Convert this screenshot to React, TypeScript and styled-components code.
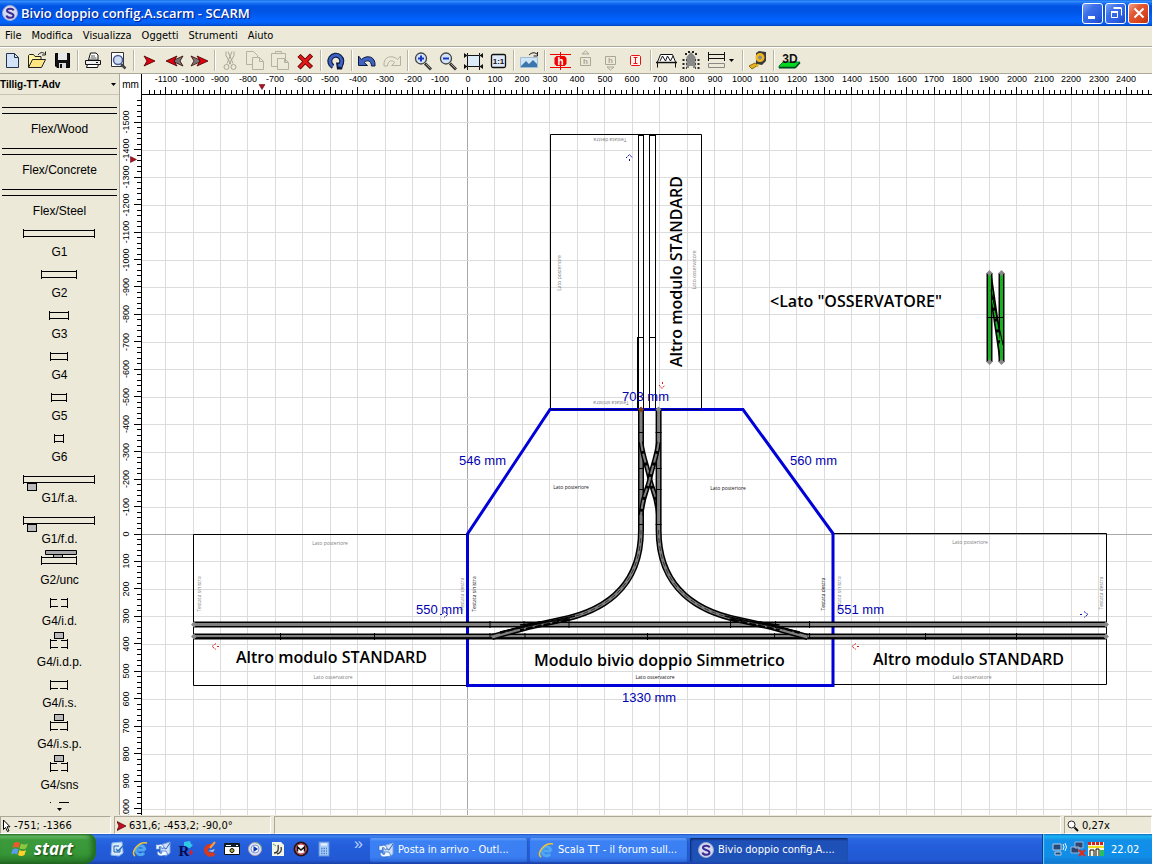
import React from 'react';
import styled, { createGlobalStyle } from 'styled-components';

const UI = '"DejaVu Sans Condensed", "DejaVu Sans", sans-serif';
const HUMANIST = '"Open Sans", "Noto Sans", sans-serif';
const ARIAL = '"Liberation Sans", Arial, sans-serif';
const FACE = '#ece9d8';

const GlobalStyle = createGlobalStyle`
  * { box-sizing: border-box; }
  body { margin: 0; background: #fff; font-family: ${UI}; font-size: 11px; color: #000; }
  button, select { font: inherit; color: inherit; }
`;

const Desktop = styled.div`
  display: flex;
  flex-direction: column;
  height: 100vh;
  min-height: 480px;
  padding-right: 4px;
  overflow: hidden;
`;

/* ---------- title bar ---------- */

const TitleBar = styled.header`
  display: flex;
  align-items: center;
  flex: none;
  height: 26px;
  padding: 0 3px 0 2px;
  gap: 3px;
  background: linear-gradient(#0a5ae0 0, #3a94ff 1px, #1a72f4 3px, #0054e3 6px, #0055e5 12px, #0260fa 18px, #0366ff 22px, #0253d8 25px, #003dbc 26px);
`;

const Title = styled.h1`
  flex: 1;
  margin: 0;
  color: #fff;
  font: 600 13px/24px ${HUMANIST};
  text-shadow: 1px 1px 1px #0a1883;
  white-space: nowrap;
`;

const CaptionButton = styled.button<{ $close?: boolean }>`
  display: grid;
  place-items: center;
  width: 21px;
  height: 21px;
  margin-left: -1px;
  padding: 0;
  border: 1px solid #fff;
  border-radius: 3px;
  background: ${p => (p.$close
    ? 'linear-gradient(135deg, #f0a088 0, #e25a35 35%, #d8421a 75%, #b83008)'
    : 'linear-gradient(135deg, #7ba2f2 0, #3c70ea 35%, #2a5ce0 75%, #1745c0)')};
`;

/* ---------- menu and toolbar ---------- */

const MenuBar = styled.nav`
  display: flex;
  flex: none;
  gap: 10px;
  height: 21px;
  padding: 0 5px;
  background: ${FACE};
  border-bottom: 1px solid #aca899;
`;

const MenuItem = styled.button`
  padding: 0 0 2px;
  border: 0;
  background: none;
`;

const ToolBar = styled.div`
  display: flex;
  flex: none;
  align-items: center;
  height: 27px;
  background: ${FACE};
  border-top: 1px solid #fff;
  border-bottom: 1px solid #aca899;
`;

const Tool = styled.button<{ $narrow?: boolean }>`
  display: grid;
  place-items: center start;
  width: ${p => (p.$narrow ? 11 : 25)}px;
  height: 24px;
  padding: 0;
  border: 0;
  background: none;
`;

const ToolGap = styled.span`
  width: 6px;
  height: 21px;
  background: linear-gradient(90deg, transparent 2px, #b9b5a2 2px, #b9b5a2 3px, #fff 3px, #fff 4px, transparent 4px);
`;

/* ---------- work area ---------- */

const Workspace = styled.main`
  display: grid;
  grid-template-columns: 120px 22px minmax(0, 1fr);
  grid-template-rows: 21px minmax(0, 1fr);
  flex: 1;
  min-height: 0;
`;

const Palette = styled.aside`
  grid-row: 1 / 3;
  display: flex;
  flex-direction: column;
  min-height: 0;
  background: ${FACE};
  border-right: 1px solid #aca899;
`;

const LibraryRow = styled.label`
  display: grid;
  grid-template-columns: minmax(0, 1fr);
  flex: none;
  align-items: center;
`;

const LibraryField = styled.select`
  grid-area: 1 / 1;
  height: 21px;
  padding: 2px 12px 0 0;
  border: 0;
  border-bottom: 1px solid #c9c5b2;
  outline: 0;
  appearance: none;
  font: bold 10px/18px ${ARIAL};
  background: ${FACE};
`;

const SelectArrow = styled.svg`
  grid-area: 1 / 1;
  justify-self: end;
  margin-right: 3px;
  pointer-events: none;
`;

const PaletteList = styled.div`
  flex: 1;
  min-height: 0;
  padding-top: 3px;
  overflow: hidden;
`;

const PaletteItem = styled.button`
  display: flex;
  flex-direction: column;
  align-items: center;
  width: 119px;
  height: 41px;
  padding: 0;
  border: 0;
  background: none;
  font: 12px/14px ${ARIAL};
`;

const ScrollMore = styled.button`
  display: grid;
  place-items: center;
  flex: none;
  width: 118px;
  height: 11px;
  padding: 0;
  border: 0;
  background: none;
`;

const UnitCell = styled.div`
  display: flex;
  align-items: center;
  justify-content: center;
  border-right: 1px solid #000;
  font: 10px/20px ${ARIAL};
`;

const Drawing = styled.svg`
  display: block;
  width: 100%;
  height: 100%;
  overflow: hidden;
`;

const RulerText = styled.text`
  font: 9px ${ARIAL};
  text-anchor: middle;
`;

const ModuleName = styled.text`
  font: 600 16px ${HUMANIST};
`;

const SideNote = styled.text<{ $dark?: boolean }>`
  font: 5px ${HUMANIST};
  fill: ${p => (p.$dark ? '#111' : '#808080')};
  text-anchor: middle;
`;

const Dimension = styled.text`
  font: 13px ${ARIAL};
  fill: #0000b0;
`;

/* ---------- status bar and task bar ---------- */

const StatusBar = styled.footer`
  display: flex;
  flex: none;
  gap: 3px;
  height: 19px;
  background: ${FACE};
`;

const StatusCell = styled.div<{ $width?: number }>`
  display: flex;
  align-items: center;
  gap: 3px;
  flex: ${p => (p.$width ? 'none' : '1')};
  width: ${p => (p.$width ? `${p.$width}px` : 'auto')};
  height: 18px;
  margin-top: 1px;
  padding: 1px 0 0 2px;
  border: 1px solid #aca899;
  border-right-color: #fff;
  border-bottom-color: #fff;
  white-space: nowrap;
`;

const TaskBar = styled.div`
  display: flex;
  flex: none;
  height: 30px;
  background: linear-gradient(#1f4fc0 0, #3f85f0 2px, #2a66e2 5px, #245edb 12px, #2258d4 26px, #1941a5 30px);
`;

const StartButton = styled.button`
  display: flex;
  align-items: center;
  gap: 5px;
  width: 96px;
  height: 30px;
  padding: 0 0 1px 11px;
  border: 0;
  border-radius: 0 8px 12px 0;
  color: #fff;
  font: italic bold 17px/28px ${HUMANIST};
  text-shadow: 1px 1px 2px #14420f;
  background: linear-gradient(#2f7a30 0, #6cc068 2px, #3c9a3c 6px, #369636 20px, #2b7c2b 27px, #1f5f1f 30px);
  box-shadow: inset -4px 0 5px #216b21;
`;

const QuickLaunch = styled.div`
  display: flex;
  align-items: center;
  width: 273px;
  padding-left: 9px;
`;

const QuickButton = styled.button`
  display: grid;
  place-items: center;
  width: 23px;
  height: 26px;
  padding: 0;
  border: 0;
  background: none;
`;

const MoreButton = styled.button`
  margin-left: 14px;
  padding: 0 5px 10px;
  border: 0;
  color: #bcd3ff;
  background: none;
  font: 16px/14px ${ARIAL};
`;

const Tasks = styled.div`
  display: flex;
  flex: 1;
  align-items: center;
  gap: 2px;
  padding: 1px 0 0 1px;
`;

const Task = styled.button<{ $active?: boolean }>`
  display: flex;
  align-items: center;
  gap: 4px;
  width: 158px;
  height: 24px;
  padding: 0 8px;
  border: 0;
  border-radius: 2px;
  color: #fff;
  white-space: nowrap;
  background: ${p => (p.$active
    ? 'linear-gradient(#153a90, #1e50b8 3px, #1e52b7)'
    : 'linear-gradient(#6aa4ff, #3c81f3 3px, #3a7ef2 19px, #2d66d8)')};
  box-shadow: ${p => (p.$active ? 'inset 1px 1px 2px #0c2866' : 'inset -1px 0 1px #2456c0')};
`;

const Tray = styled.div`
  display: flex;
  align-items: center;
  gap: 2px;
  width: 110px;
  padding-left: 9px;
  color: #fff;
  background: linear-gradient(#0c59b9 0, #18b6f2 2px, #1290e8 6px, #0f8ee8 22px, #1276cc 30px);
  border-left: 1px solid #0b3c8a;
  box-shadow: inset 1px 0 1px #5fd0ff;
`;

const Clock = styled.time`
  margin-left: 5px;
`;

/* ---------- toolbar glyphs on a 24px square ---------- */

const Glyph = ({ children, size = 24 }: { children: React.ReactNode; size?: number }) => (
  <svg width={size} height={size} viewBox={`0 0 ${size} ${size}`} fill="none" aria-hidden="true">{children}</svg>
);

const ToolText = styled.text<{ $size: number; $serif?: boolean }>`
  font: bold ${p => p.$size}px ${p => (p.$serif ? '"Liberation Serif", serif' : ARIAL)};
  text-anchor: middle;
`;

const DartRight = ({ x, fill = '#e00010' }: { x: number; fill?: string }) => (
  <path d={`M${x} 7l11 5-11 5 3-5z`} fill={fill} stroke="#400" strokeWidth=".8" />
);
const DartLeft = ({ x, fill = '#e00010' }: { x: number; fill?: string }) => (
  <path d={`M${x} 7l-11 5 11 5-3-5z`} fill={fill} stroke="#300" strokeWidth=".8" />
);

const Lens = ({ sign }: { sign: string }) => (
  <>
    <path d="M14 14.500l6 6" stroke="#333" strokeWidth="3" />
    <path d="M15 15l4.500 4.500" stroke="#999" strokeWidth="1" />
    <circle cx="10" cy="9.500" r="5.500" fill="#d4e3fa" stroke="#444" strokeWidth="1.300" />
    <path d={sign} stroke="#1638c0" strokeWidth="2" />
  </>
);

const tools: Record<string, React.ReactNode> = {
  'Nuovo': (
    <path d="M6.500 4.500h8l4 4v10h-12zM14.500 4.500v4h4" fill="#d3e3f8" stroke="#23344f" />
  ),
  'Apri': (
    <>
      <path d="M3.500 18.500v-12l1-1h4l1.500 2h6v3" fill="#fff3a0" stroke="#222" />
      <path d="M3.500 18.500l4-8h13l-4 8z" fill="#ffe680" stroke="#222" />
      <path d="M13 6q3-4 6.500-1.500M20.500 2.500v3.500h-3.500" stroke="#222" />
    </>
  ),
  'Salva': (
    <>
      <path d="M5.500 4.500h14v14h-12.500l-1.500-1.500z" fill="#111" stroke="#000" />
      <path d="M8 4h9v7h-9z" fill="#e8e8e8" />
      <path d="M9 14h7v5h-7z" fill="#ddd" />
      <path d="M10 15h2v4h-2z" fill="#111" />
    </>
  ),
  'Stampa': (
    <>
      <path d="M7.500 11l2-7h5.500l2 2v5z" fill="#fff" stroke="#111" />
      <path d="M10 7h4M9.500 9h6" stroke="#555" />
      <path d="M4.500 11.500h15v4h-15z" fill="#eee" stroke="#111" />
      <path d="M6.500 15.500h11l-1 3h-11z" fill="#fff" stroke="#111" />
      <path d="M15 13.500h2" stroke="#111" />
    </>
  ),
  'Anteprima': (
    <>
      <path d="M5.500 3.500h12v14h-12z" fill="#fff" stroke="#333" />
      <path d="M15 15l4.500 4.500" stroke="#444" strokeWidth="2.500" />
      <circle cx="12" cy="11" r="4.500" fill="#cfdcf5" stroke="#4b5f94" strokeWidth="1.500" />
    </>
  ),
  'Avanti': <DartRight x={7} />,
  'Inizio': <><DartLeft x={21} fill="#777" /><DartLeft x={15} /></>,
  'Fine': <><DartRight x={4} fill="#777" /><DartRight x={10} /></>,
  'Taglia': (
    <g stroke="#aaa694">
      <path d="M8 2.500v4l5 9M16 2.500v4l-5 9M10 2.500l5 12M14 2.500l-5 12" />
      <circle cx="8.500" cy="18" r="2.500" /><circle cx="15.500" cy="18" r="2.500" />
    </g>
  ),
  'Copia': (
    <g stroke="#b5b19e" fill="#ece9d8">
      <path d="M3.500 2.500h7l4 4v9h-11z" /><path d="M9.500 8.500h7l4 4v8h-11zM16.500 8.500v4h4" />
    </g>
  ),
  'Incolla': (
    <g stroke="#b5b19e" fill="#ece9d8">
      <path d="M3.500 4.500h14v13h-14zM7.500 4.500v-2h6v2" /><path d="M9.500 9.500h7l4 4v7h-11zM16.500 9.500v4h4" />
    </g>
  ),
  'Elimina': (
    <>
      <path d="M6 6.500l12.500 12M18.500 6l-12.500 13" stroke="#5a0000" strokeWidth="4.500" />
      <path d="M6.500 7l11.500 11M18 6.500l-11.500 12" stroke="#e01818" strokeWidth="2.800" />
    </>
  ),
  'Ruota': (
    <>
      <path d="M9 17.500a6 6 0 1 1 7-1" stroke="#10183c" strokeWidth="5" />
      <path d="M12 13.500h8l-2 7h-5z" fill="#10183c" />
      <path d="M9 17.500a6 6 0 1 1 7.500-1.500M14 16l4 1" stroke="#3d63c4" strokeWidth="2.800" />
    </>
  ),
  'Annulla': (
    <path d="M3.500 7v9.500h9l-3.300-3c3-3 7-2 7.300 3.500h3.500c1-10-8.500-11.500-13.500-6.500z" fill="#3d63c4" stroke="#10183c" />
  ),
  'Ripeti': (
    <path d="M20.500 7v9.500h-9l3.300-3c-3-3-7-2-7.300 3.500h-3.500c-1-10 8.500-11.500 13.500-6.500z" stroke="#b5b19e" />
  ),
  'Ingrandisci': <Lens sign="M7 9.500h6M10 6.500v6" />,
  'Riduci': <Lens sign="M7 9.500h6" />,
  'Adatta': (
    <>
      <path d="M6.500 6.500h12v11h-12z" fill="#dcebf8" stroke="#111" />
      <path d="M3 6.500h3M19 6.500h3M3 17.500h3M19 17.500h3M6.500 4v2M18.500 4v2M6.500 18v3M18.500 18v3" stroke="#111" />
      <path d="M3 4l3.500 2.500L3 9zM22 4l-3.500 2.500L22 9zM3 15l3.500 2.500L3 20zM22 15l-3.500 2.500L22 20z" fill="#111" />
    </>
  ),
  'Scala 1:1': (
    <>
      <rect x="5.500" y="5.500" width="14" height="13" rx="1.500" fill="#dfe9fa" stroke="#111" strokeWidth="1.300" />
      <ToolText $size={8} x="12.500" y="15" fill="#111">1:1</ToolText>
    </>
  ),
  'Sfondo': (
    <>
      <path d="M3.500 8.500h17v10h-17z" fill="#cfe4f7" stroke="#9dbcd8" />
      <path d="M4 17l5-5 3 3 4-4 4 4v3h-16z" fill="#3d76ab" />
      <path d="M12 6q4-4 8-1M20.500 3v4h-4" stroke="#222" />
    </>
  ),
  'Altezza': (
    <>
      <path d="M2 5.500h21M2 18.500h21M12.500 3v18" stroke="#f00000" />
      <path d="M6.500 9l2-2h8l2 2v6l-2 2h-8l-2-2z" fill="#f00000" />
      <ToolText $size={10} x="12.500" y="16" fill="#fff">h</ToolText>
    </>
  ),
  'Altezza su': (
    <g stroke="#aaa694">
      <path d="M7.500 8.500h10v8h-10z" /><path d="M9 5l3.500-3 3.500 3z" />
      <ToolText $size={8} x="12.500" y="15" fill="#aaa694" stroke="none">h</ToolText>
    </g>
  ),
  'Altezza giù': (
    <g stroke="#aaa694">
      <path d="M7.500 7.500h10v8h-10z" /><path d="M9 18l3.500 3 3.500-3z" />
      <ToolText $size={8} x="12.500" y="14" fill="#aaa694" stroke="none">h</ToolText>
    </g>
  ),
  'Pendenza': (
    <g stroke="#e81010">
      <path d="M8.500 6.500h8l1 1v8l-1 1h-8l-1-1v-8z" fill="#fff4f0" /><path d="M10.500 8.500h4M10.500 14.500h4M12.500 8.500v6" />
    </g>
  ),
  'Ponte': (
    <>
      <path d="M3.500 13l3-7.500h12l3 7.500" fill="#fff" stroke="#111" />
      <path d="M6 12l2.500-5 3 5 2-5 3 5 2.500-5" stroke="#111" />
      <path d="M2 13.500h21" stroke="#111" strokeWidth="1.500" />
      <path d="M3.500 14v4.500M21.500 14v4.500" stroke="#111" />
    </>
  ),
  'Tunnel': (
    <>
      <path d="M7.500 19v-11l4.500-5 4.500 5v11h-2.500v-2h-4v2z" fill="#888" />
      <path d="M4.500 20v-12M19.500 20v-12M6 5h2M16 5h2M9 3h6" stroke="#222" strokeWidth="2" strokeDasharray="2 2" />
      <path d="M7.500 20v-11M16.500 20v-11" stroke="#444" strokeDasharray="2 2" />
    </>
  ),
  'Binari paralleli': (
    <>
      <path d="M4 5.500h17M4 9.500h17M4.500 3v9M20.500 3v9" stroke="#111" />
      <path d="M4.500 14.500h16v4h-16z" stroke="#888" />
    </>
  ),
  'Misura': (
    <>
      <path d="M3 17l6-3 3 2-6 4z" fill="#e6b422" stroke="#8a6a10" />
      <path d="M10 4l3-2 7 1v9l-4 4-6-1z" fill="#3b3b3b" />
      <circle cx="14" cy="8.500" r="4.500" fill="#f0b81e" /><circle cx="14" cy="8.500" r="2" fill="#8b8b8b" />
      <path d="M12 15l-1 3" stroke="#e6b422" strokeWidth="2" />
    </>
  ),
};

const View3D = () => (
  <>
    <path d="M2 17l4-4h17l-5 6h-16z" fill="#00d820" stroke="#063" strokeWidth=".8" />
    <path d="M2 18.500h16.500l4.500-5" stroke="#042" strokeWidth="1.500" />
    <ToolText $size={12} x="13" y="14" fill="#111">3D</ToolText>
  </>
);

const toolGroups: string[][] = [
  ['Nuovo', 'Apri', 'Salva'],
  ['Stampa', 'Anteprima'],
  ['Avanti', 'Inizio', 'Fine'],
  ['Taglia', 'Copia', 'Incolla', 'Elimina'],
  ['Ruota'],
  ['Annulla', 'Ripeti'],
  ['Ingrandisci', 'Riduci', 'Adatta', 'Scala 1:1'],
  ['Sfondo'],
  ['Altezza', 'Altezza su', 'Altezza giù', 'Pendenza'],
  ['Ponte', 'Tunnel', 'Binari paralleli', 'menu'],
  ['Misura'],
  ['3D'],
];

const DownTriangle = () => (
  <svg width="5" height="3" viewBox="0 0 5 3" aria-hidden="true"><path d="M0 0h5l-2.500 3z" /></svg>
);

/* ---------- track palette ---------- */

const Flex = () => <path d="M2 9.500h115M2 15.500h115" stroke="#000" />;
const Straight = ({ w, y = 8 }: { w: number; y?: number }) => {
  const l = Math.round(58 - w / 2) + 0.5;
  return <path d={`M${l} ${y}v9M${l + w} ${y}v9M${l} ${y + 1.5}h${w}M${l} ${y + 7.5}h${w}`} stroke="#000" />;
};
const Feeder = () => (
  <><Straight w={71} y={8} /><rect x="27.500" y="16.500" width="9" height="7" fill="#bbb" stroke="#000" /></>
);
const Isolated = ({ top, box }: { top?: boolean; box?: boolean }) => (
  <>
    <path d="M50.500 8v10M67.500 8v10" stroke="#000" />
    <path d={top ? 'M50 9.500h7m4 0h7M50 16.500h8m3 0h7' : 'M50 9.500h18M50 16.500h8m2 0h8'} stroke="#000" />
    {box && <rect x="54.500" y="1.500" width="9" height="6" fill="#bbb" stroke="#000" />}
  </>
);

const palette: { name: string; shape: React.ReactNode }[] = [
  { name: 'Flex/Wood', shape: <Flex /> },
  { name: 'Flex/Concrete', shape: <Flex /> },
  { name: 'Flex/Steel', shape: <Flex /> },
  { name: 'G1', shape: <Straight w={71} /> },
  { name: 'G2', shape: <Straight w={35} /> },
  { name: 'G3', shape: <Straight w={19} /> },
  { name: 'G4', shape: <Straight w={17} /> },
  { name: 'G5', shape: <Straight w={15} /> },
  { name: 'G6', shape: <Straight w={9} /> },
  { name: 'G1/f.a.', shape: <Feeder /> },
  { name: 'G1/f.d.', shape: <Feeder /> },
  {
    name: 'G2/unc',
    shape: (
      <>
        <Straight w={35} y={7} />
        <path d="M45.500 1.500h31v4h-31zM53.500 5.500h9v3h-9z" fill="#aaa" stroke="#000" />
      </>
    ),
  },
  { name: 'G4/i.d.', shape: <Isolated top /> },
  { name: 'G4/i.d.p.', shape: <Isolated top box /> },
  { name: 'G4/i.s.', shape: <Isolated /> },
  { name: 'G4/i.s.p.', shape: <Isolated box /> },
  { name: 'G4/sns', shape: <Isolated box top /> },
  { name: '', shape: <path d="M50 7.500h1M59 7.500h10" stroke="#000" /> },
];

/* ---------- plan drawing: 100 mm is 27.45 px on screen ---------- */

const STEP = 27.45;
const ORIGIN_X = 467.5;
const ORIGIN_Y = 534;
const VIEW_X = 142;
const VIEW_Y = 95;
const range = (from: number, to: number) => Array.from({ length: to - from + 1 }, (_, i) => from + i);
const px = (v: number) => Math.round(v - 0.5) + 0.5;

const HorizontalRuler = () => (
  <Drawing>
    <g transform={`translate(${-VIEW_X} -74)`}>
      {range(-58, 225).map(i => {
        const x = px(ORIGIN_X + (i * STEP) / 5);
        return <path key={i} d={`M${x} ${i % 5 ? 90 : 87}V95`} stroke="#000" />;
      })}
      {range(-11, 24).map(i => (
        <RulerText key={i} x={Math.round(ORIGIN_X + i * STEP)} y={82}>{i * 100}</RulerText>
      ))}
      <path d="M142 94.500H4000" stroke="#000" />
      <path d="M259 84.500h6l-3 5z" fill="#b01020" stroke="#400" strokeWidth=".5" />
    </g>
  </Drawing>
);

const VerticalRuler = () => (
  <Drawing>
    <g transform={`translate(-120 ${-VIEW_Y})`}>
      {range(-79, 100).map(i => {
        const y = px(ORIGIN_Y + (i * STEP) / 5);
        return <path key={i} d={`M${i % 5 ? 137 : 134} ${y}H142`} stroke="#000" />;
      })}
      {range(-15, 10).map(i => (
        <RulerText key={i} transform={`translate(129 ${Math.round(ORIGIN_Y + i * STEP)}) rotate(-90)`}>{i * 100}</RulerText>
      ))}
      <path d="M141.500 95V3000" stroke="#000" />
      <path d="M130.500 156.500v6l6-3z" fill="#b01020" stroke="#400" strokeWidth=".5" />
    </g>
  </Drawing>
);

const Track = ({ d, core = '#808080' }: { d: string; core?: string }) => (
  <>
    <path d={d} stroke="#000" strokeWidth="6" />
    <path d={d} stroke={core} strokeWidth="3" />
  </>
);

const Branch = () => (
  <>
    <Track d="M641 409V530C641 590 600 612 560 620L528 627L492 637" />
    <path d="M570 619L520 625M500 632L575 616" stroke="#000" strokeWidth="1.500" />
    <path d="M641 530C641 590 600 612 560 620L528 627" stroke="#222" strokeWidth=".8" strokeDasharray="5 3" />
    <path d="M568 620L520 630M540 622L500 633" stroke="#000" strokeWidth="2" strokeDasharray="7 2" />
    <path d="M641 442C643 458 648 468 650 480C653 492 657 496 658.500 515" stroke="#000" strokeWidth="5" />
    <path d="M641 442C643 458 648 468 650 480C653 492 657 496 658.500 515" stroke="#808080" strokeWidth="2" strokeDasharray="9 3" />
    <path d="M638 432.500h6M638 468.500h6M638 489.500h6M638 524.500h6M524 621v7M569 621v7M490 621v7M490 633v6M525 633v6" stroke="#000" />
  </>
);

const tip = (x: number, y: number) => `M${x - 3} ${y}l3-3 3 3-3 3z`;

const Plan = () => (
  <Drawing fill="none">
    <g transform={`translate(${-VIEW_X} ${-VIEW_Y})`}>
      {range(-11, 60).map(i => (
        <path key={`v${i}`} d={`M${px(ORIGIN_X + i * STEP)} 95V3000`} stroke={i ? '#dcdcdc' : '#a8a8a8'} />
      ))}
      {range(-15, 60).map(i => (
        <path key={`h${i}`} d={`M142 ${px(ORIGIN_Y + 0.5 + i * STEP)}H4000`} stroke={i ? '#dcdcdc' : '#a8a8a8'} />
      ))}

      <g stroke="#000">
        <path d="M550.500 134.500H701.500V409.500H550.500zM193.500 534.500H467.500V685.500H193.500zM833.500 533.500H1106.500V684.500H833.500z" />
        <path d="M638.500 409V134.500M643.500 135V409M649.500 135V409M655.500 135V409M638 337.500H643.500M649.500 337.500H655.500M638 135.500h6M649 135.500h7" />
        <path d="M638 337V409" strokeWidth="2" />
      </g>

      <path d="M550 409.500H743L833 533.500V685.500H467.500V534z" stroke="#0000d8" strokeWidth="3" />
      <path d="M550 409.500H701" stroke="#000058" />

      <SideNote $dark x="571" y="489">Lato posteriore</SideNote>
      <SideNote $dark x="728" y="490">Lato posteriore</SideNote>
      <SideNote $dark x="655" y="679">Lato osservatore</SideNote>
      <SideNote x="330" y="545">Lato posteriore</SideNote>
      <SideNote x="970" y="544">Lato posteriore</SideNote>
      <SideNote x="333" y="679">Lato osservatore</SideNote>
      <SideNote x="972" y="679">Lato osservatore</SideNote>
      <SideNote transform="translate(561 273) rotate(-90)">Lato posteriore</SideNote>
      <SideNote transform="translate(696 270) rotate(-90)">Lato osservatore</SideNote>
      <SideNote transform="translate(610 138) rotate(180)">Testata destra</SideNote>
      <SideNote transform="translate(611 401) rotate(180)">Testata sinistra</SideNote>
      <SideNote transform="translate(201 594) rotate(-90)">Testata sinistra</SideNote>
      <SideNote transform="translate(464 594) rotate(-90)">Testata destra</SideNote>
      <SideNote $dark transform="translate(476 594) rotate(-90)">Testata sinistra</SideNote>
      <SideNote $dark transform="translate(825 594) rotate(-90)">Testata destra</SideNote>
      <SideNote transform="translate(841 594) rotate(-90)">Testata sinistra</SideNote>
      <SideNote transform="translate(1103 593) rotate(-90)">Testata destra</SideNote>

      <Track d="M193 624.500H1107" />
      <Track d="M193 636.500H1107" />
      <path d="M193 637.500H1107" stroke="#111" />
      <Branch />
      <g transform="translate(1299.600 0) scale(-1 1)"><Branch /></g>
      <path d="M280.500 633v7M374.500 633v7M647.500 633v7M925.500 633v7M1016.500 633v7" stroke="#000" />
      <path d={[tip(194, 624.5), tip(194, 636.5), tip(1106, 624.5), tip(1106, 636.5), tip(658.5, 409.5)].join('')} fill="#888" />
      <path d={tip(641, 409.5)} fill="#804018" />

      <g>
        <path d="M989.500 276L1001.500 358" stroke="#000" strokeWidth="5" />
        <Track d="M989.500 273V362" core="#18b020" />
        <Track d="M1001.500 273V362" core="#18b020" />
        <path d="M989.500 278L1001.500 356" stroke="#18b020" strokeWidth="2" strokeDasharray="8 3" />
        <path d="M991.500 274V362M991 290L1003 345M988 317.500h16" stroke="#000" />
        <path d={[tip(989.5, 273), tip(1001.5, 273), tip(989.5, 362), tip(1001.5, 362)].join('')} fill="#888" />
      </g>

      <path d="M216 643.500l-4 3 4 3M217 646.500h2M856 643.500l-4 3 4 3M857 646.500h2M659 385l3 3.500 3-3.500M662.500 382v2" stroke="#e02020" strokeDasharray="2 1" />
      <path d="M1084 611.500l4 3-4 3M1080 614.500h3M444 611.500l4 3-4 3M440 614.500h3M626 158l3.500-3.500 3 3.500M629.500 159v2" stroke="#1010b0" strokeDasharray="2 1" />

      <Dimension x="622" y="401">703 mm</Dimension>
      <Dimension x="459" y="465">546 mm</Dimension>
      <Dimension x="790" y="465">560 mm</Dimension>
      <Dimension x="416" y="614">550 mm</Dimension>
      <Dimension x="837" y="614">551 mm</Dimension>
      <Dimension x="622" y="702">1330 mm</Dimension>

      <g fill="#000">
        <ModuleName x="236" y="663">Altro modulo STANDARD</ModuleName>
        <ModuleName x="873" y="665">Altro modulo STANDARD</ModuleName>
        <ModuleName x="534" y="666">Modulo bivio doppio Simmetrico</ModuleName>
        <ModuleName x="770" y="307">{'<Lato "OSSERVATORE"'}</ModuleName>
        <ModuleName transform="translate(682 367) rotate(-90)">Altro modulo STANDARD</ModuleName>
      </g>
    </g>
  </Drawing>
);

/* ---------- small 16px pictures ---------- */

const AppLogo = () => (
  <Glyph size={16}>
    <circle cx="8" cy="8" r="7.500" fill="#d5daf0" stroke="#9aa6d0" />
    <path d="M11.500 5.500C11 3 5 3 5 5.800C5 8.500 11.500 7.500 11.500 10.500C11.500 13.500 5 13.500 4.500 10.500" stroke="#3a2a94" strokeWidth="2" />
  </Glyph>
);
const Envelope = () => (
  <Glyph size={16}>
    <path d="M5 4l10-3v11l-4 3-5-2z" fill="#cfe0fb" stroke="#7fa4dc" />
    <path d="M6 5l5 3 4-6" stroke="#3a66b4" />
    <path d="M1 3l2 1c3-2 6 0 6 3l-2 1c0-2-1-3-3-2l1 2-4 .500zM13 14l-7 1c-3 0-4-2-4-4l2-1c0 2 1 3 3 2l-1-2 5 0z" fill="#f4faff" stroke="#2a68c8" strokeWidth=".7" />
  </Glyph>
);
const Explorer = () => (
  <Glyph size={16}>
    <path d="M13 9H6M13 9A4.500 4.500 0 1 0 12 12" stroke="#4fa8f0" strokeWidth="3" />
    <path d="M3 15C-2 12 6 0 15 2" stroke="#f4c430" strokeWidth="1.500" />
  </Glyph>
);

const quick: { name: string; icon: React.ReactNode }[] = [
  {
    name: 'Mostra desktop',
    icon: (
      <Glyph size={16}>
        <path d="M3 2l10-1 1 11-4 3-8-1z" fill="#d9eafc" stroke="#8fbcec" />
        <path d="M5 5h5M5 5v6h6V8" stroke="#1d5faa" /><path d="M7 8l2 2 6-6" stroke="#2b6fc0" strokeWidth="1.500" />
      </Glyph>
    ),
  },
  { name: 'Internet Explorer', icon: <Explorer /> },
  { name: 'Outlook', icon: <Envelope /> },
  {
    name: 'Editor',
    icon: (
      <Glyph size={16}>
        <path d="M6 1l6-1 1 3 2 1-3 3-6-1z" fill="#30c8e8" />
        <ToolText $size={15} $serif x="6" y="15" fill="#060a50">R</ToolText>
        <path d="M13 9v5M11 11.500h4" stroke="#e02020" strokeWidth="1.500" />
      </Glyph>
    ),
  },
  {
    name: 'CCleaner',
    icon: <Glyph size={16}><path d="M11 5A4.500 4.500 0 1 0 13 12" stroke="#d8381c" strokeWidth="4" /><path d="M9 7l5-6" stroke="#f4a040" strokeWidth="2" /><path d="M7 10l7-2-2 3z" fill="#a8c8f0" /></Glyph>,
  },
  {
    name: 'Prompt',
    icon: <Glyph size={16}><path d="M.500 2.500h15v11H.500z" fill="#fff" stroke="#111" /><path d="M1 4.500h14" stroke="#123" strokeWidth="3" /><path d="M2 4.500h5M12 4.500h2" stroke="#fff" /><circle cx="8" cy="9.500" r="2" fill="#aa3" stroke="#111" /></Glyph>,
  },
  {
    name: 'Media Player',
    icon: <Glyph size={16}><circle cx="8" cy="8" r="6.500" fill="#dfe6f8" stroke="#b8a0a8" /><path d="M8 1.500a6.500 6.500 0 0 1 6.500 6.500" stroke="#70b070" /><circle cx="8" cy="8" r="4" fill="#f4f8ff" stroke="#7a98d8" /><path d="M6.500 5l4.500 3-4.500 3z" fill="#1238b0" /></Glyph>,
  },
  {
    name: 'Audio',
    icon: <Glyph size={16}><path d="M2 1h9l3 3v11H2z" fill="#f2f4e8" /><path d="M4 12c4 0 5-3 4-8M7 13c4-1 5-4 4-7" stroke="#333" strokeWidth="1.300" /><path d="M3 3l3 2" stroke="#5a5" /></Glyph>,
  },
  {
    name: 'Modem',
    icon: <Glyph size={16}><circle cx="8" cy="8" r="6.500" fill="#fff" stroke="#301010" strokeWidth="2" /><circle cx="8" cy="8" r="5" stroke="#c02030" /><path d="M4.500 10.500V6L8 9l3.500-3v4.500" stroke="#111" strokeWidth="1.500" /></Glyph>,
  },
  {
    name: 'Calcolatrice',
    icon: <Glyph size={16}><rect x="3" y="1" width="10" height="14" fill="#a9cdf8" stroke="#5a8fd8" /><path d="M5 3.500h6" stroke="#eef" strokeWidth="2" /><path d="M5 7.500h6M5 10h6M5 12.500h6" stroke="#4d82d0" strokeWidth="1.500" strokeDasharray="1.500 1" /></Glyph>,
  },
];

export default function App() {
  return (
    <Desktop>
      <GlobalStyle />
      <TitleBar>
        <AppLogo />
        <Title>Bivio doppio config.A.scarm - SCARM</Title>
        <CaptionButton aria-label="Riduci a icona">
          <Glyph size={16}><path d="M3 12.500h7" stroke="#fff" strokeWidth="3" /></Glyph>
        </CaptionButton>
        <CaptionButton aria-label="Ripristina">
          <Glyph size={16}>
            <path d="M6 3.500h7.500v7M3.500 7v5.500h6v-5.500z" stroke="#fff" /><path d="M5.500 3h8M3 7h7" stroke="#fff" strokeWidth="2" />
          </Glyph>
        </CaptionButton>
        <CaptionButton $close aria-label="Chiudi">
          <Glyph size={16}><path d="M3.500 3.500l9 9M12.500 3.500l-9 9" stroke="#fff" strokeWidth="2" /></Glyph>
        </CaptionButton>
      </TitleBar>

      <MenuBar>
        {['File', 'Modifica', 'Visualizza', 'Oggetti', 'Strumenti', 'Aiuto'].map(m => <MenuItem key={m}>{m}</MenuItem>)}
      </MenuBar>

      <ToolBar role="toolbar">
        {toolGroups.map((group, g) => (
          <React.Fragment key={group[0]}>
            {g > 0 && <ToolGap />}
            {group.map(name => (
              <Tool key={name} aria-label={name} $narrow={name === 'menu'}>
                {name === 'menu' ? <DownTriangle /> : <Glyph>{name === '3D' ? <View3D /> : tools[name]}</Glyph>}
              </Tool>
            ))}
          </React.Fragment>
        ))}
      </ToolBar>

      <Workspace>
        <Palette>
          <LibraryRow>
            <LibraryField aria-label="Libreria binari"><option>Tillig-TT-Adv</option></LibraryField>
            <SelectArrow width="5" height="3" viewBox="0 0 5 3"><path d="M0 0h5l-2.500 3z" /></SelectArrow>
          </LibraryRow>
          <PaletteList>
            {palette.map(({ name, shape }) => (
              <PaletteItem key={name}>
                <svg width="119" height="24" fill="none" aria-hidden="true">{shape}</svg>
                {name}
              </PaletteItem>
            ))}
          </PaletteList>
          <ScrollMore aria-label="Altri binari"><DownTriangle /></ScrollMore>
        </Palette>
        <UnitCell>mm</UnitCell>
        <HorizontalRuler />
        <VerticalRuler />
        <Plan />
      </Workspace>

      <StatusBar>
        <StatusCell $width={111}>
          <svg width="8" height="13" viewBox="0 0 8 13" aria-hidden="true">
            <path d="M.500 1v9.500l2-2 2 4 1.500-.700-2-4h3z" fill="#fff" stroke="#000" />
          </svg>
          -751; -1366
        </StatusCell>
        <StatusCell $width={157}>
          <svg width="9" height="10" viewBox="0 0 9 10" aria-hidden="true">
            <path d="M0 .500l9 4.500-9 4.500 2-4.500z" fill="#c81020" stroke="#400" strokeWidth=".7" />
          </svg>
          631,6; -453,2; -90,0°
        </StatusCell>
        <StatusCell />
        <StatusCell $width={88}>
          <svg width="12" height="12" viewBox="0 0 12 12" fill="none" aria-hidden="true">
            <circle cx="4.500" cy="4.500" r="3.500" fill="#fff" stroke="#222" /><path d="M7.500 7.500l3.500 3.500" stroke="#111" strokeWidth="2" />
          </svg>
          0,27x
        </StatusCell>
      </StatusBar>

      <TaskBar>
        <StartButton>
          <svg width="18" height="18" viewBox="0 0 18 18" aria-hidden="true">
            <path d="M3 3q3-2 6 0l-1.500 5q-3-2-6 0z" fill="#f05a28" />
            <path d="M10 3.500q3 2 7 0l-2 5q-3 1.500-6.500 0z" fill="#8cc83c" />
            <path d="M1.500 9.500q3-2 6 0l-1.500 5q-3-2-6 0z" fill="#5a9cf0" />
            <path d="M8.500 10q3 2 6.500 0l-1.500 5q-3 2-6.500 0z" fill="#ffd028" />
          </svg>
          start
        </StartButton>
        <QuickLaunch>
          {quick.map(q => <QuickButton key={q.name} aria-label={q.name}>{q.icon}</QuickButton>)}
          <MoreButton>»</MoreButton>
        </QuickLaunch>
        <Tasks>
          <Task><Envelope />Posta in arrivo - Outl...</Task>
          <Task><Explorer />Scala TT - il forum sull...</Task>
          <Task $active><AppLogo />Bivio doppio config.A....</Task>
        </Tasks>
        <Tray>
          <Glyph size={16}>
            <path d="M1 3h8v6H1zM3 11h6v3H3z" fill="#234a7c" stroke="#bcd" /><path d="M11 3q2 3 0 6M13 2q3 4 0 8" stroke="#e8f4ff" />
          </Glyph>
          <Glyph size={16}>
            <path d="M5 1h8v6H5zM1 6h8v6H1z" fill="#2b4470" stroke="#9ab4d8" /><path d="M9 9l6 6M15 9l-6 6" stroke="#e82818" strokeWidth="2" />
          </Glyph>
          <Glyph size={16}>
            <path d="M0 1h16v14H0z" fill="#f4f4e0" /><path d="M0 2.500h16" stroke="#d02020" strokeWidth="3" strokeDasharray="3 1" />
            <path d="M0 6h16" stroke="#f0e020" strokeWidth="2" /><path d="M2 15V9h4v6M8 15V8h3v7" stroke="#111" /><path d="M12 9h4v6h-4z" fill="#28c060" />
          </Glyph>
          <Clock>22.02</Clock>
        </Tray>
      </TaskBar>
    </Desktop>
  );
}
